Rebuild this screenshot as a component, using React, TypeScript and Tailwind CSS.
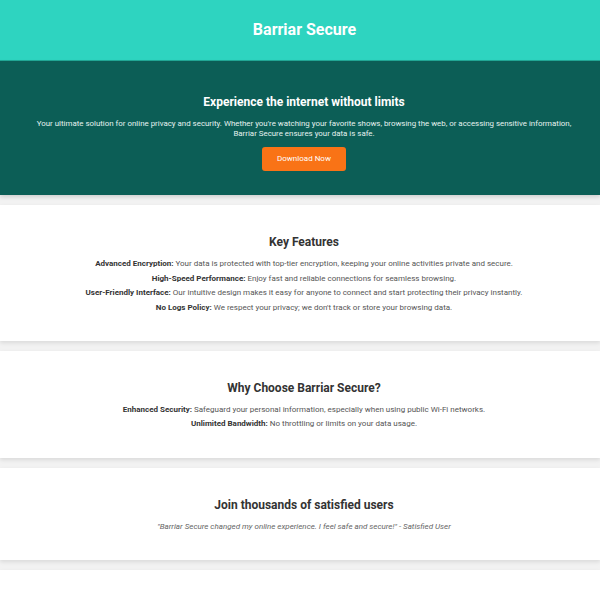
import { type ReactNode } from 'react'

const features = [
	{ label: 'Advanced Encryption:', text: 'Your data is protected with top-tier encryption, keeping your online activities private and secure.' },
	{ label: 'High-Speed Performance:', text: 'Enjoy fast and reliable connections for seamless browsing.' },
	{ label: 'User-Friendly Interface:', text: 'Our intuitive design makes it easy for anyone to connect and start protecting their privacy instantly.' },
	{ label: 'No Logs Policy:', text: "We respect your privacy; we don't track or store your browsing data." },
]

const reasons = [
	{ label: 'Enhanced Security:', text: 'Safeguard your personal information, especially when using public Wi-Fi networks.' },
	{ label: 'Unlimited Bandwidth:', text: 'No throttling or limits on your data usage.' },
]

const Card = ({ title, children }: { title: string; children: ReactNode }) => (
	<section className="mb-[10px] bg-white pt-[29px] pr-[2px] pb-[25.5px] pl-[10px] text-center shadow-[0_2px_4px_rgba(0,0,0,0.1)]">
		<h2 className="mb-[7px] text-[12px] leading-[16px] font-bold text-[#333]">{title}</h2>
		{children}
	</section>
)

const Line = ({ label, text }: { label: string; text: string }) => (
	<p className="text-[8px] leading-[14.6px] text-[#555]">
		<strong className="font-bold text-[#333]">{label}</strong> {text}
	</p>
)

export default function App() {
	return (
		<div className="min-h-[600px] bg-[#f2f2f2] font-['Roboto',sans-serif]">
			<header className="flex h-[61px] items-center justify-center border-b border-[#22a997] bg-[#2ed4c0] pl-[9px]">
				<h1 className="text-[16px] font-bold text-white">Barriar Secure</h1>
			</header>

			<section className="mb-[10px] bg-[#0c5e56] pt-[33px] pr-[4px] pb-[24px] pl-[12px] text-center text-white shadow-[0_2px_4px_rgba(0,0,0,0.15)]">
				<h2 className="mb-[9px] text-[12px] leading-[16px] font-bold">Experience the internet without limits</h2>
				<p className="text-[7.9px] leading-[10px] text-[#e6f2f0]">
					Your ultimate solution for online privacy and security. Whether you're watching your favorite shows, browsing the web, or accessing sensitive information,
					<br />
					Barriar Secure ensures your data is safe.
				</p>
				<button className="mt-[8px] h-[24px] w-[84px] rounded-[3px] bg-[#f97316] text-[8px] text-white">
					Download Now
				</button>
			</section>

			<Card title="Key Features">
				{features.map((f) => (
					<Line key={f.label} label={f.label} text={f.text} />
				))}
			</Card>

			<Card title="Why Choose Barriar Secure?">
				{reasons.map((r) => (
					<Line key={r.label} label={r.label} text={r.text} />
				))}
			</Card>

			<Card title="Join thousands of satisfied users">
				<p className="text-[8px] leading-[14.6px] text-[#666] italic">
					"Barriar Secure changed my online experience. I feel safe and secure!" - Satisfied User
				</p>
			</Card>

			<section className="h-[40px] bg-white shadow-[0_2px_4px_rgba(0,0,0,0.1)]" />
		</div>
	)
}
